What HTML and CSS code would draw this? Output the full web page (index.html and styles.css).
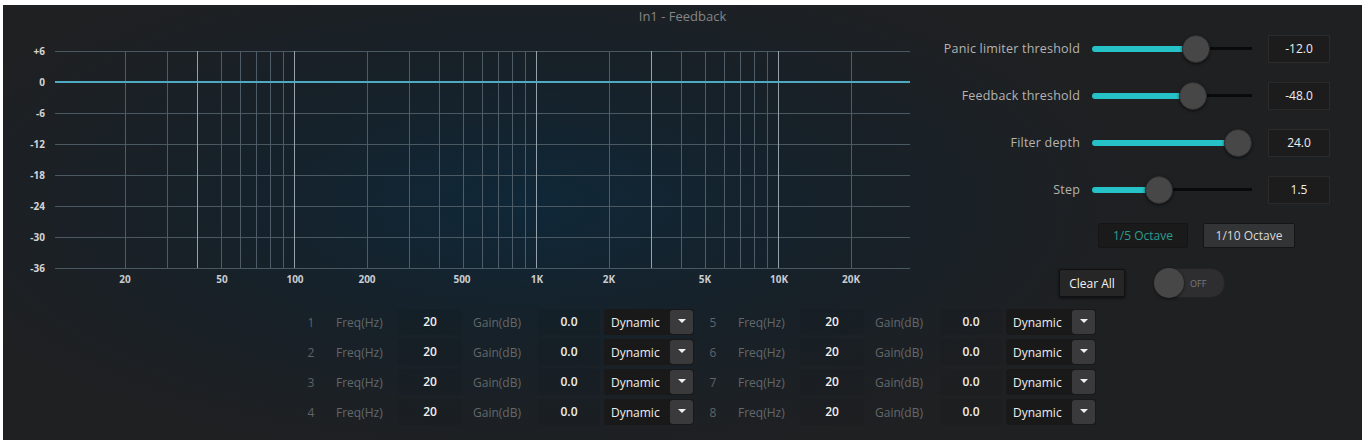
FILE: index.html
```html
<!DOCTYPE html>
<html lang="en">
<head>
    <meta charset="UTF-8">
    <meta name="viewport" content="width=device-width, initial-scale=1.0">
    <title>In1 - Feedback</title>
    <link rel="stylesheet" href="styles.css">
</head>
<body>
    <div class="panel">
        <div class="title">In1 - Feedback</div>

        <div class="main">
            <svg class="graph" width="912" height="280" viewBox="0 0 912 280">
                <!-- horizontal grid -->
                <g class="hline">
                    <line x1="52" y1="26.5" x2="907" y2="26.5"/>
                    <line x1="52" y1="88.5" x2="907" y2="88.5"/>
                    <line x1="52" y1="119.5" x2="907" y2="119.5"/>
                    <line x1="52" y1="150.5" x2="907" y2="150.5"/>
                    <line x1="52" y1="181.5" x2="907" y2="181.5"/>
                    <line x1="52" y1="212.5" x2="907" y2="212.5"/>
                    <line x1="52" y1="243.5" x2="907" y2="243.5"/>
                </g>
                <!-- vertical grid, log scale -->
                <g class="vline">
                    <line x1="122.5" y1="26" x2="122.5" y2="243"/>
                    <line x1="164.5" y1="26" x2="164.5" y2="243"/>
                    <line x1="218.5" y1="26" x2="218.5" y2="243"/>
                    <line x1="237.5" y1="26" x2="237.5" y2="243"/>
                    <line x1="253.5" y1="26" x2="253.5" y2="243"/>
                    <line x1="267.5" y1="26" x2="267.5" y2="243"/>
                    <line x1="280.5" y1="26" x2="280.5" y2="243"/>
                    <line x1="364.5" y1="26" x2="364.5" y2="243"/>
                    <line x1="406.5" y1="26" x2="406.5" y2="243"/>
                    <line x1="436.5" y1="26" x2="436.5" y2="243"/>
                    <line x1="460.5" y1="26" x2="460.5" y2="243"/>
                    <line x1="479.5" y1="26" x2="479.5" y2="243"/>
                    <line x1="495.5" y1="26" x2="495.5" y2="243"/>
                    <line x1="509.5" y1="26" x2="509.5" y2="243"/>
                    <line x1="522.5" y1="26" x2="522.5" y2="243"/>
                    <line x1="606.5" y1="26" x2="606.5" y2="243"/>
                    <line x1="678.5" y1="26" x2="678.5" y2="243"/>
                    <line x1="702.5" y1="26" x2="702.5" y2="243"/>
                    <line x1="721.5" y1="26" x2="721.5" y2="243"/>
                    <line x1="737.5" y1="26" x2="737.5" y2="243"/>
                    <line x1="751.5" y1="26" x2="751.5" y2="243"/>
                    <line x1="764.5" y1="26" x2="764.5" y2="243"/>
                    <line x1="848.5" y1="26" x2="848.5" y2="243"/>
                </g>
                <g class="vline bright">
                    <line x1="194.5" y1="26" x2="194.5" y2="243"/>
                    <line x1="291.5" y1="26" x2="291.5" y2="243"/>
                    <line x1="533.5" y1="26" x2="533.5" y2="243"/>
                    <line x1="648.5" y1="26" x2="648.5" y2="243"/>
                    <line x1="775.5" y1="26" x2="775.5" y2="243"/>
                </g>
                <line class="zero" x1="52" y1="57" x2="907" y2="57"/>

                <g class="ylabel">
                    <text x="42" y="30">+6</text>
                    <text x="42" y="61">0</text>
                    <text x="42" y="92">-6</text>
                    <text x="42" y="123">-12</text>
                    <text x="42" y="154">-18</text>
                    <text x="42" y="185">-24</text>
                    <text x="42" y="216">-30</text>
                    <text x="42" y="247">-36</text>
                </g>
                <g class="xlabel">
                    <text x="122" y="258">20</text>
                    <text x="219" y="258">50</text>
                    <text x="292" y="258">100</text>
                    <text x="364" y="258">200</text>
                    <text x="459" y="258">500</text>
                    <text x="534" y="258">1K</text>
                    <text x="606" y="258">2K</text>
                    <text x="702" y="258">5K</text>
                    <text x="776" y="258">10K</text>
                    <text x="848" y="258">20K</text>
                </g>
            </svg>

            <div class="controls">
                <div class="ctrl-row">
                    <span class="ctrl-label">Panic limiter threshold</span>
                    <div class="slider">
                        <div class="fill" style="width: 65%"></div>
                        <div class="knob" style="left: 65%"></div>
                    </div>
                    <div class="value">-12.0</div>
                </div>
                <div class="ctrl-row">
                    <span class="ctrl-label">Feedback threshold</span>
                    <div class="slider">
                        <div class="fill" style="width: 63%"></div>
                        <div class="knob" style="left: 63%"></div>
                    </div>
                    <div class="value">-48.0</div>
                </div>
                <div class="ctrl-row">
                    <span class="ctrl-label">Filter depth</span>
                    <div class="slider">
                        <div class="fill" style="width: 91%"></div>
                        <div class="knob" style="left: 91%"></div>
                    </div>
                    <div class="value">24.0</div>
                </div>
                <div class="ctrl-row">
                    <span class="ctrl-label">Step</span>
                    <div class="slider">
                        <div class="fill" style="width: 42%"></div>
                        <div class="knob" style="left: 42%"></div>
                    </div>
                    <div class="value">1.5</div>
                </div>

                <div class="octave-row">
                    <button class="btn octave active">1/5 Octave</button>
                    <button class="btn octave">1/10 Octave</button>
                </div>

                <div class="action-row">
                    <button class="btn clear">Clear All</button>
                    <div class="toggle">
                        <span class="toggle-knob"></span>
                        <span class="toggle-text">OFF</span>
                    </div>
                </div>
            </div>
        </div>

        <div class="bands">
            <div class="band-col">
                <div class="band">
                    <span class="num">1</span><span class="lbl">Freq(Hz)</span><span class="cell">20</span>
                    <span class="lbl">Gain(dB)</span><span class="cell">0.0</span>
                    <div class="select"><span class="select-text">Dynamic</span><span class="select-btn"></span></div>
                </div>
                <div class="band">
                    <span class="num">2</span><span class="lbl">Freq(Hz)</span><span class="cell">20</span>
                    <span class="lbl">Gain(dB)</span><span class="cell">0.0</span>
                    <div class="select"><span class="select-text">Dynamic</span><span class="select-btn"></span></div>
                </div>
                <div class="band">
                    <span class="num">3</span><span class="lbl">Freq(Hz)</span><span class="cell">20</span>
                    <span class="lbl">Gain(dB)</span><span class="cell">0.0</span>
                    <div class="select"><span class="select-text">Dynamic</span><span class="select-btn"></span></div>
                </div>
                <div class="band">
                    <span class="num">4</span><span class="lbl">Freq(Hz)</span><span class="cell">20</span>
                    <span class="lbl">Gain(dB)</span><span class="cell">0.0</span>
                    <div class="select"><span class="select-text">Dynamic</span><span class="select-btn"></span></div>
                </div>
            </div>
            <div class="band-col">
                <div class="band">
                    <span class="num">5</span><span class="lbl">Freq(Hz)</span><span class="cell">20</span>
                    <span class="lbl">Gain(dB)</span><span class="cell">0.0</span>
                    <div class="select"><span class="select-text">Dynamic</span><span class="select-btn"></span></div>
                </div>
                <div class="band">
                    <span class="num">6</span><span class="lbl">Freq(Hz)</span><span class="cell">20</span>
                    <span class="lbl">Gain(dB)</span><span class="cell">0.0</span>
                    <div class="select"><span class="select-text">Dynamic</span><span class="select-btn"></span></div>
                </div>
                <div class="band">
                    <span class="num">7</span><span class="lbl">Freq(Hz)</span><span class="cell">20</span>
                    <span class="lbl">Gain(dB)</span><span class="cell">0.0</span>
                    <div class="select"><span class="select-text">Dynamic</span><span class="select-btn"></span></div>
                </div>
                <div class="band">
                    <span class="num">8</span><span class="lbl">Freq(Hz)</span><span class="cell">20</span>
                    <span class="lbl">Gain(dB)</span><span class="cell">0.0</span>
                    <div class="select"><span class="select-text">Dynamic</span><span class="select-btn"></span></div>
                </div>
            </div>
        </div>
    </div>
</body>
</html>
```

FILE: styles.css
```css
body {
    margin: 0;
    background: #ffffff;
    font-family: 'Open Sans', 'Noto Sans', sans-serif;
    overflow: hidden;
}
.panel {
    margin: 5px 3px 0 3px;
    height: 435px;
    background:
        radial-gradient(ellipse 620px 260px at 520px 200px, rgba(10, 42, 64, 0.75) 0%, rgba(14, 34, 48, 0.5) 50%, rgba(30, 31, 33, 0) 100%),
        #1f2022;
    color: #ddd;
}
.title {
    height: 20px;
    line-height: 22px;
    text-align: center;
    font-size: 13px;
    color: #858585;
}
.main {
    display: flex;
    height: 280px;
}
.graph {
    display: block;
    flex: none;
}
.hline line {
    stroke: #4a5862;
    stroke-width: 1;
}
.vline line {
    stroke: #4d5c67;
    stroke-width: 1;
}
.vline.bright line {
    stroke: #95a2ab;
}
.zero {
    stroke: #4eaac2;
    stroke-width: 2;
}
.ylabel text {
    font-family: 'Open Sans', sans-serif;
    font-size: 10px;
    font-weight: 700;
    fill: #d4d4d4;
    text-anchor: end;
}
.xlabel text {
    font-family: 'Open Sans', sans-serif;
    font-size: 10px;
    font-weight: 700;
    fill: #c8ccd0;
    text-anchor: middle;
}

/* right side controls */
.controls {
    flex: 1;
    display: flex;
    flex-direction: column;
}
.ctrl-row {
    display: flex;
    align-items: center;
    height: 47px;
}
.ctrl-label {
    width: 165px;
    text-align: right;
    font-size: 12.5px;
    letter-spacing: 0.2px;
    color: #b4b4b4;
}
.slider {
    position: relative;
    width: 160px;
    height: 28px;
    margin-left: 12px;
    background: linear-gradient(#0a0a0a, #0a0a0a) no-repeat center / 100% 3px;
}
.fill {
    position: absolute;
    left: 0;
    top: 11px;
    height: 6px;
    border-radius: 3px;
    background: #25c2c8;
}
.knob {
    position: absolute;
    top: 0;
    width: 26px;
    height: 26px;
    margin-left: -14px;
    border-radius: 50%;
    background: #474747;
    border: 1px solid #2e2e2e;
    box-shadow: 0 1px 3px rgba(0, 0, 0, 0.6);
}
.value {
    width: 60px;
    height: 26px;
    line-height: 26px;
    margin-left: 16px;
    text-align: center;
    font-size: 12px;
    color: #eee;
    background: #1c1c1d;
    border: 1px solid #2a2a2a;
}
.octave-row {
    display: flex;
    gap: 15px;
    margin-top: 10px;
    padding-left: 183px;
}
.btn {
    font-family: 'Open Sans', sans-serif;
    font-size: 12px;
    height: 25px;
    padding: 0;
    border: 1px solid #151515;
    border-radius: 2px;
    cursor: pointer;
}
.octave {
    width: 92px;
    background: #333436;
    color: #d8d8d8;
}
.octave.active {
    width: 90px;
    background: #1a1a1b;
    color: #2a9d8f;
}
.action-row {
    display: flex;
    align-items: center;
    gap: 28px;
    margin-top: 20px;
    padding-left: 144px;
}
.clear {
    width: 66px;
    height: 28px;
    background: #262627;
    color: #f2f2f2;
    border-color: #111;
    box-shadow: 0 1px 3px rgba(0, 0, 0, 0.7);
}
.toggle {
    display: flex;
    align-items: center;
    width: 70px;
    height: 28px;
    border-radius: 14px;
    background: #2e2e30;
    border: 1px solid #232323;
}
.toggle-knob {
    width: 30px;
    height: 30px;
    border-radius: 50%;
    background: #474747;
    box-shadow: 0 1px 3px rgba(0, 0, 0, 0.6);
}
.toggle-text {
    margin-left: 6px;
    font-size: 9px;
    color: #7c7c7c;
}

/* band table */
.bands {
    display: flex;
    gap: 8px;
    padding: 2px 0 0 297px;
}
.band {
    display: flex;
    align-items: center;
    height: 30px;
    font-size: 12px;
}
.num {
    width: 22px;
    text-align: center;
    color: #5e6468;
}
.lbl {
    width: 62px;
    padding-left: 14px;
    color: #62686c;
}
.band .lbl:nth-child(4) {
    padding-left: 11px;
    width: 65px;
}
.cell {
    width: 64px;
    height: 26px;
    line-height: 26px;
    text-align: center;
    color: #f0f0f0;
    font-weight: 600;
    background: rgba(0, 0, 0, 0.05);
}
.cell:nth-child(5) {
    width: 62px;
}
.select {
    display: flex;
    align-items: center;
    margin-left: 4px;
    width: 90px;
    height: 26px;
    border-radius: 3px;
    background: #19191a;
}
.select-text {
    flex: 1;
    padding-left: 7px;
    color: #eeeeee;
}
.select-btn {
    position: relative;
    width: 23px;
    height: 24px;
    margin-right: 1px;
    border-radius: 3px;
    background: #3a3a3c;
}
.select-btn::after {
    content: "";
    position: absolute;
    left: 8px;
    top: 9px;
    border-left: 4px solid transparent;
    border-right: 4px solid transparent;
    border-top: 4px solid #f0f0f0;
}
```
